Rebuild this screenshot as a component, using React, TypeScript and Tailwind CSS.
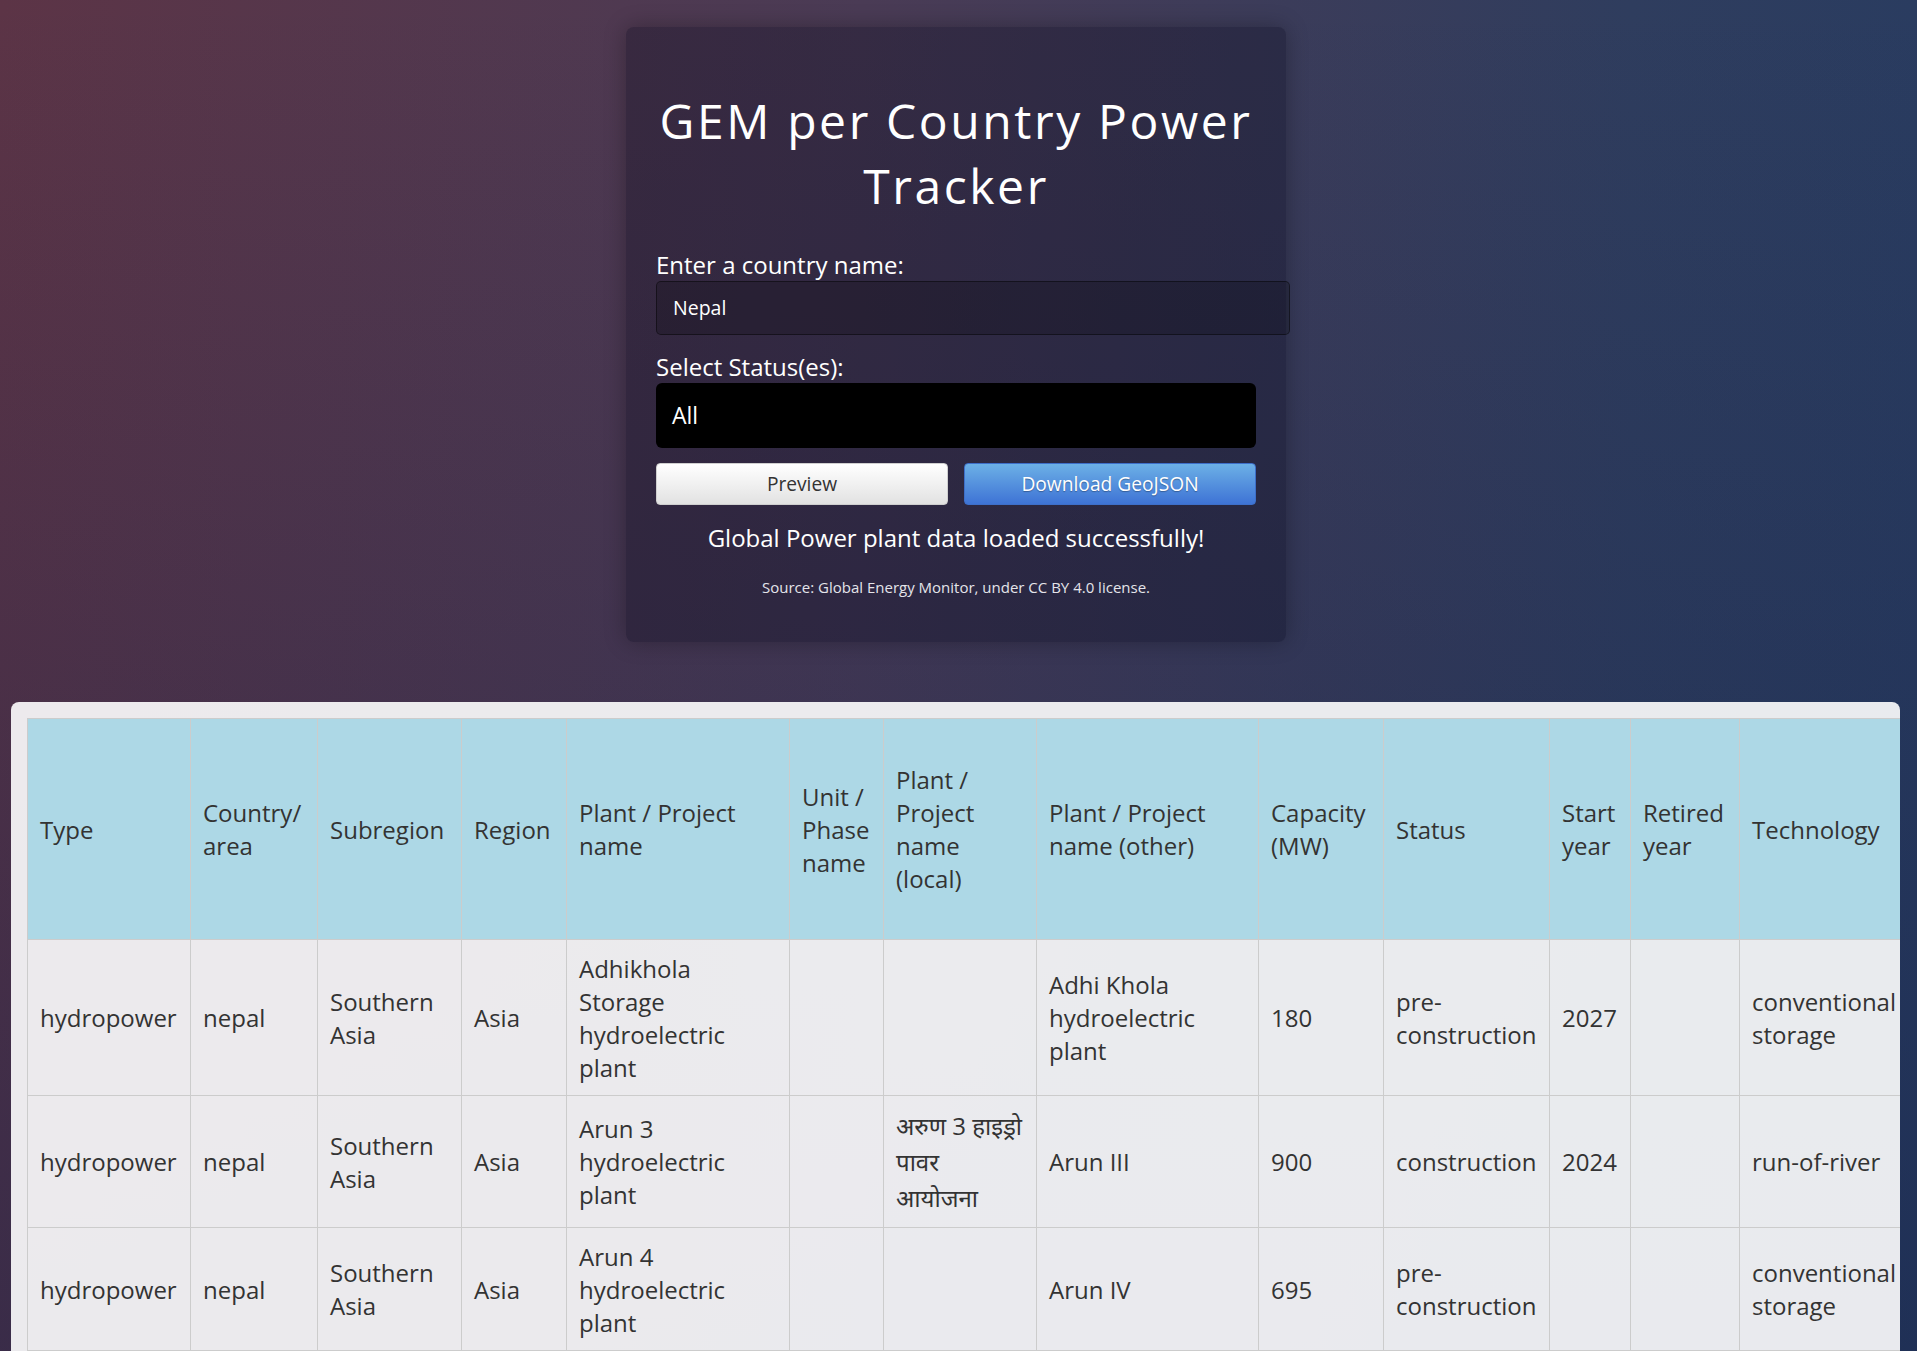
import React from "react";

const columns = [
    { label: "Type", w: "w-[163px]" },
    { label: "Country/ area", w: "w-[127px]" },
    { label: "Subregion", w: "w-[144px]" },
    { label: "Region", w: "w-[105px]" },
    { label: "Plant / Project name", w: "w-[223px]" },
    { label: "Unit / Phase name", w: "w-[94px]" },
    { label: "Plant / Project name (local)", w: "w-[153px]" },
    { label: "Plant / Project name (other)", w: "w-[222px]" },
    { label: "Capacity (MW)", w: "w-[125px]" },
    { label: "Status", w: "w-[166px]" },
    { label: "Start year", w: "w-[81px]" },
    { label: "Retired year", w: "w-[109px]" },
    { label: "Technology", w: "w-[200px]" },
];

const rows = [
    ["hydropower", "nepal", "Southern Asia", "Asia", "Adhikhola Storage hydroelectric plant", "", "", "Adhi Khola hydroelectric plant", "180", "pre-construction", "2027", "", "conventional storage"],
    ["hydropower", "nepal", "Southern Asia", "Asia", "Arun 3 hydroelectric plant", "", "अरुण 3 हाइड्रो पावर आयोजना", "Arun III", "900", "construction", "2024", "", "run-of-river"],
    ["hydropower", "nepal", "Southern Asia", "Asia", "Arun 4 hydroelectric plant", "", "", "Arun IV", "695", "pre-construction", "", "", "conventional storage"],
];

// devanagari lines sit taller than the latin ones
const isDevanagari = (s: string) => /[\u0900-\u097F]/.test(s);

export default function App() {
    return (
        <div
            className="h-screen overflow-hidden bg-[linear-gradient(to_bottom,rgba(20,35,75,0)_0%,rgba(20,35,75,0.48)_100%),linear-gradient(to_right,#5c3446_0%,#4a3b55_45%,#2f3d5e_85%,#2a3c60_100%)]"
            style={{ fontFamily: '"Open Sans", "Noto Sans", "Noto Sans Devanagari", "Lohit Devanagari", FreeSans, sans-serif' }}
        >
            <div className="pt-[27px]">
                <div className="ml-[626px] w-[660px] rounded-lg bg-[rgba(5,5,25,0.3)] px-[30px] pt-[61px] pb-[44px] text-white shadow-[0_0_22px_rgba(0,0,0,0.28)]">
                    <h1 className="mb-[30px] text-center text-[48px] font-normal leading-[65px] tracking-[2.6px]">
                        GEM per Country Power Tracker
                    </h1>

                    <label className="block text-[24px] leading-[33px]">Enter a country name:</label>
                    <div className="mb-[15px] h-[54px] w-[634px] rounded-[5px] border border-[rgba(0,0,0,0.45)] bg-[rgba(0,0,0,0.2)] px-4 text-[19.5px] leading-[52px]">
                        Nepal
                    </div>

                    <label className="block text-[24px] leading-[33px]">Select Status(es):</label>
                    <div className="flex h-[65px] w-[600px] items-center rounded-[6px] bg-black px-4 text-[23px]">
                        All
                    </div>

                    <div className="mt-[15px] flex w-[600px] gap-4">
                        <button className="h-[42px] flex-1 rounded-[4px] border border-[#cfcfcf] bg-[linear-gradient(to_bottom,#ffffff,#e2e2e2)] text-[19.2px] text-[#333]">
                            Preview
                        </button>
                        <button className="h-[42px] flex-1 rounded-[4px] border border-[#3d6fc9] bg-[linear-gradient(to_bottom,#6cb0e6,#3e73d5)] text-[19.2px] text-white [text-shadow:0_1px_1px_rgba(0,0,0,0.3)]">
                            Download GeoJSON
                        </button>
                    </div>

                    <p className="mt-[16px] w-[600px] text-center text-[24px] leading-[33px]">
                        Global Power plant data loaded successfully!
                    </p>
                    <p className="mt-[23px] w-[600px] text-center text-[15px] leading-[21px] text-[#e4e4ea]">
                        Source: Global Energy Monitor, under CC BY 4.0 license.
                    </p>
                </div>
            </div>

            <div className="mt-[60px] ml-[11px] w-[1889px] overflow-hidden rounded-lg bg-white/90 p-4">
                <table className="w-[1912px] table-fixed border-collapse text-[24px] leading-[33px] text-[#333]">
                    <colgroup>
                        {columns.map((c) => (
                            <col key={c.label} className={c.w} />
                        ))}
                    </colgroup>
                    <thead>
                        <tr>
                            {columns.map((c) => (
                                <th
                                    key={c.label}
                                    className="border border-[#ccc] bg-[#add8e6] px-3 py-[44px] text-left align-middle font-normal"
                                >
                                    {c.label}
                                </th>
                            ))}
                        </tr>
                    </thead>
                    <tbody>
                        {rows.map((row, i) => (
                            <tr key={i}>
                                {row.map((cell, j) => (
                                    <td
                                        key={j}
                                        className={`border border-[#ccc] px-3 py-[11.5px] align-middle ${isDevanagari(cell) ? "leading-[36px]" : ""}`}
                                    >
                                        {cell}
                                    </td>
                                ))}
                            </tr>
                        ))}
                    </tbody>
                </table>
            </div>
        </div>
    );
}
